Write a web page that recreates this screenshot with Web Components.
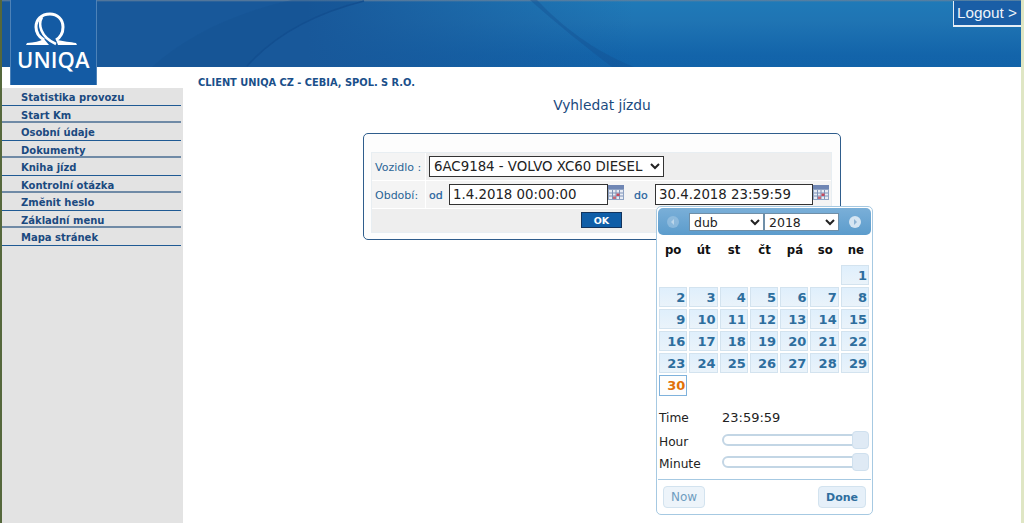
<!DOCTYPE html>
<html lang="cs">
<head>
<meta charset="utf-8">
<title>Vyhledat jízdu</title>
<style>
  html, body { margin: 0; padding: 0; background: #fff; }
  body { font-family: "DejaVu Sans", sans-serif; overflow: hidden; }
</style>
</head>
<body>
<uq-page>
  <uq-header slot="header"></uq-header>
  <uq-sidebar slot="sidebar"></uq-sidebar>
  <uq-client-title>CLIENT UNIQA CZ - CEBIA, SPOL. S R.O.</uq-client-title>
  <uq-page-title>Vyhledat jízdu</uq-page-title>
  <uq-search-form></uq-search-form>
</uq-page>

<script>
class UqPage extends HTMLElement {
  constructor() {
    super();
    this.attachShadow({ mode: "open" });
    this.shadowRoot.innerHTML = `
      <style>
        :host {
          display: block;
          box-sizing: border-box;
          height: 523px;
          border-left: 2px solid #55683c;
          border-right: 3px solid #dfe6c4;
          overflow: hidden;
        }
        .body { display: flex; height: 456px; }
        .side { width: 181px; flex: none; padding-top: 21px; box-sizing: border-box; }
        .main { flex: 1; display: flex; flex-direction: column; align-items: stretch; padding-top: 8px; }
      </style>
      <slot name="header"></slot>
      <div class="body">
        <div class="side"><slot name="sidebar"></slot></div>
        <div class="main"><slot></slot></div>
      </div>
    `;
  }
}

class UqHeader extends HTMLElement {
  constructor() {
    super();
    this.attachShadow({ mode: "open" });
    this.shadowRoot.innerHTML = `
      <style>
        :host {
          display: flex;
          justify-content: space-between;
          align-items: flex-start;
          height: 67px;
          position: relative;
          background:
            linear-gradient(180deg, #64809c 0, rgba(100,128,156,0) 2px),
            linear-gradient(90deg, rgba(24,88,154,1) 0, rgba(24,88,154,1) 30%, rgba(24,88,154,0) 62%),
            linear-gradient(180deg, #1f7ab8 0, #1f74b3 22px, #1364aa 55px, #1263a9 100%);
        }
        .swoosh { position: absolute; left: 0; top: 0; width: 1019px; height: 67px; }
        .logo {
          position: relative;
          flex: none;
          margin-left: 8px;
          width: 87px;
          height: 85px;
          background: #145ba4;
          border-left: 1px solid #4d82b8;
          border-right: 1px solid #4d82b8;
          box-sizing: border-box;
          display: flex;
          flex-direction: column;
          align-items: flex-start;
        }
        .logo svg { display: block; margin-top: 12px; margin-left: 14px; }
        .word {
          font: 600 22px/24px "Open Sans", sans-serif;
          color: #fff;
          letter-spacing: 0.1px;
          margin: 1px 0 0 6px;
        }
        .logout {
          position: relative;
          margin-top: 1px;
          height: 26px;
          width: 68px;
          box-sizing: border-box;
          background: #1a5ea6;
          border-left: 1px solid #e6eef6;
          border-bottom: 2px solid #e6eef6;
          color: #eef4fa;
          font: 15.3px/24px "Liberation Sans", Arial, sans-serif;
          padding-left: 3px;
          white-space: nowrap;
        }
      </style>
      <svg class="swoosh" viewBox="0 0 1019 67" fill="none">
        <path d="M150 67 C185 35 235 12 290 0 L362 0 C310 14 272 36 245 67 Z" fill="#15508f" opacity=".3"/>
        <path d="M245 66 C272 36 310 14 362 1" stroke="#134f90" stroke-width="1.5"/>
        <path d="M535 0 C560 26 590 50 632 67 L610 67 C585 48 555 24 528 0 Z" fill="#154f92" opacity=".4"/>
      </svg>
      <div class="logo">
        <svg width="54" height="34" viewBox="0 0 54 34" fill="none">
          <path d="M31 28 C36 25 38 20.5 38 15 C38 7 32 2 25 2 C16 2 11 8 11 15 C11 20 14 25 19 28" stroke="#fff" stroke-width="3"/>
          <path d="M17 5 C13 12 15 25 31 32" stroke="#fff" stroke-width="2.6"/>
          <path d="M1 33 L2 31 C9 30.5 15 29.5 19 27 L24 33 Z" fill="#fff"/>
          <path d="M31 27.5 C38 29.5 46 30 51 31 L52 33 L33 33 Z" fill="#fff"/>
        </svg>
        <div class="word">UNIQA</div>
      </div>
      <div class="logout">Logout &gt;</div>
    `;
  }
}

const MENU_ITEMS = [
  "Statistika provozu",
  "Start Km",
  "Osobní údaje",
  "Dokumenty",
  "Kniha jízd",
  "Kontrolní otázka",
  "Změnit heslo",
  "Základní menu",
  "Mapa stránek",
];

class UqSidebar extends HTMLElement {
  constructor() {
    super();
    this.attachShadow({ mode: "open" });
    const items = MENU_ITEMS.map((label, i) => {
      const cls = i % 2 ? "item alt" : "item";
      return `<a class="${cls}">${label}</a>`;
    }).join("");
    this.shadowRoot.innerHTML = `
      <style>
        :host {
          display: block;
          height: 435px;
          background: #e3e3e3;
          font: bold 10px "DejaVu Sans", sans-serif;
        }
        nav { display: flex; flex-direction: column; width: 179px; }
        .item {
          display: block;
          box-sizing: border-box;
          height: 17.5px;
          line-height: 19px;
          padding-left: 19px;
          color: #1b4a80;
          border-bottom: 1px solid #1f5a94;
          white-space: nowrap;
        }
        .alt { border-bottom: 2px solid #6f8aa6; }
      </style>
      <nav>${items}</nav>
    `;
  }
}

class UqClientTitle extends HTMLElement {
  constructor() {
    super();
    this.attachShadow({ mode: "open" });
    this.shadowRoot.innerHTML = `
      <style>
        :host {
          display: block;
          height: 14px;
          padding-left: 15px;
          font: bold 9.85px/15px "DejaVu Sans", sans-serif;
          color: #1a4f8a;
          white-space: nowrap;
        }
      </style>
      <slot></slot>
    `;
  }
}

class UqPageTitle extends HTMLElement {
  constructor() {
    super();
    this.attachShadow({ mode: "open" });
    this.shadowRoot.innerHTML = `
      <style>
        :host {
          display: block;
          margin-top: 8px;
          height: 20px;
          text-align: center;
          font: 13.8px/17px "DejaVu Sans", sans-serif;
          color: #1b4a7e;
        }
      </style>
      <slot></slot>
    `;
  }
}

class UqCalendarIcon extends HTMLElement {
  constructor() {
    super();
    this.attachShadow({ mode: "open" });
    this.shadowRoot.innerHTML = `
      <style>:host { display: block; flex: none; width: 16px; height: 15px; } svg { display: block; }</style>
      <svg width="16" height="15" viewBox="0 0 16 15">
        <rect x="0" y="0" width="16" height="15" fill="#8fa3c4"/>
        <rect x="0" y="0" width="16" height="4" fill="#6f86b4"/>
        <rect x="1" y="5" width="14" height="9" fill="#e8ecf4"/>
        <path d="M4.5 5v9M8 5v9M11.5 5v9M1 8h14M1 11h14" stroke="#7f93b8" stroke-width="1"/>
        <rect x="8.5" y="8.5" width="3" height="2.5" fill="#c8475a"/>
        <rect x="5" y="11.5" width="3" height="2.5" fill="#c86a78"/>
      </svg>
    `;
  }
}

class UqSearchForm extends HTMLElement {
  constructor() {
    super();
    this.attachShadow({ mode: "open" });
    this.shadowRoot.innerHTML = `
      <style>
        :host {
          display: block;
          position: relative;
          box-sizing: border-box;
          width: 478px;
          height: 107px;
          margin: 16px auto 0;
          padding: 18px 8px 7px 7px;
          border: 1px solid #2f5d8c;
          border-radius: 5px;
          background: #fdfdfd;
          color: #2a6496;
        }
        .table { display: grid; grid-template-columns: 53px 1fr; grid-template-rows: 27px 27px 23px; gap: 1px; background: #fff; border: 1px solid #e8eef2; }
        .label, .cell { display: flex; align-items: center; white-space: nowrap; }
        .label { background: #f4f4f4; padding: 1px 0 0 3px; box-sizing: border-box; font: 11px "DejaVu Sans", sans-serif; color: #2a6496; }
        .cell { background: #eeeeee; }
        .cell.light { background: #f4f4f4; }
        .ok-row { grid-column: 1 / 3; background: #eeeeee; display: flex; justify-content: center; align-items: flex-start; padding-top: 3px; }
        .pad { padding-left: 3px; }
        select, input {
          font: 13.33px "DejaVu Sans", sans-serif;
          color: #222;
          box-sizing: border-box;
          background: #fff;
          border: 1px solid #333;
          border-radius: 0;
          margin: 0;
        }
        select { width: 235px; height: 21px; padding: 0; }
        input { height: 21px; width: 159px; padding: 0 3px; }
        input.to { width: 158px; }
        .tag { flex: none; box-sizing: border-box; width: 20px; padding-top: 2px; font: 11px "DejaVu Sans", sans-serif; font-weight: 500; color: #1f5f9c; -webkit-text-stroke: 0.2px #1f5f9c; }
        .tag.do { width: 31px; padding-left: 10px; }
        uq-calendar-icon { margin-bottom: 4px; }
        button.ok {
          width: 41px;
          height: 16px;
          padding: 0;
          background: #0f5ea8;
          border: 1px solid #12335c;
          color: #fff;
          font: bold 9.5px "DejaVu Sans", sans-serif;
        }
        uq-date-picker { position: absolute; left: 292px; top: 72px; }
      </style>
      <div class="table">
        <div class="label">Vozidlo :</div>
        <div class="cell pad">
          <select><option>6AC9184 - VOLVO XC60 DIESEL</option></select>
        </div>
        <div class="label">Období:</div>
        <div class="cell light pad">
          <span class="tag">od</span>
          <input value="1.4.2018 00:00:00">
          <uq-calendar-icon></uq-calendar-icon>
          <span class="tag do">do</span>
          <input class="to" value="30.4.2018 23:59:59">
          <uq-calendar-icon></uq-calendar-icon>
        </div>
        <div class="ok-row"><button class="ok">OK</button></div>
      </div>
      <uq-date-picker></uq-date-picker>
    `;
  }
}

const MONTH_DAYS = 30;
const FIRST_OFFSET = 6;
const WEEK_DAYS = ["po", "út", "st", "čt", "pá", "so", "ne"];

class UqDatePicker extends HTMLElement {
  constructor() {
    super();
    this.attachShadow({ mode: "open" });
    let cells = "<i></i>".repeat(FIRST_OFFSET);
    for (let d = 1; d <= MONTH_DAYS; d++) {
      cells += `<a class="${d === 30 ? "day today" : "day"}">${d}</a>`;
    }
    const names = WEEK_DAYS.map((n) => `<span>${n}</span>`).join("");
    this.shadowRoot.innerHTML = `
      <style>
        :host {
          display: block;
          box-sizing: border-box;
          width: 217px;
          height: 309px;
          padding: 1px;
          background: #fff;
          border: 1px solid #a6c9e2;
          border-radius: 5px;
          font: 12.2px "DejaVu Sans", sans-serif;
          color: #222;
        }
        .head {
          position: relative;
          height: 27px;
          background: linear-gradient(180deg, #7aafd8 0, #5c9ccc 100%);
          border-radius: 5px;
          display: flex;
          align-items: center;
          padding-left: 31px;
        }
        .head select {
          height: 18px;
          font: 12.5px "DejaVu Sans", sans-serif;
          color: #222;
          background: #fff;
          border: 1px solid #6f8fa8;
          border-radius: 0;
          padding: 0;
          margin: 0;
        }
        .month { width: 75px; }
        .year { width: 75px; }
        .nav {
          position: absolute;
          top: 8px;
          width: 12px;
          height: 12px;
          border-radius: 50%;
          background: #a9cbe6;
        }
        .nav.prev { left: 9px; opacity: .55; }
        .nav.next { left: 191px; background: #d5e5f2; }
        .nav svg { display: block; }
        .week {
          display: grid;
          grid-template-columns: repeat(7, 1fr);
          gap: 2px;
          height: 30px;
          margin: 0 1px;
          align-items: center;
          text-align: center;
          font: bold 11.7px "DejaVu Sans", sans-serif;
          color: #111;
        }
        .days {
          display: grid;
          grid-template-columns: repeat(7, 1fr);
          grid-auto-rows: 20px;
          gap: 2px;
          margin: 0 1px;
          width: 210px;
        }
        .day {
          box-sizing: border-box;
          border: 1px solid #d3e3ef;
          background: linear-gradient(180deg, #dfeffc 0, #eaf3fa 100%);
          color: #2e6e9e;
          font: bold 13px/19px "DejaVu Sans", sans-serif;
          text-align: right;
          padding-right: 1px;
        }
        .day.today { background: #fdfdfd; border-color: #7fb2dc; color: #e17009; height: 21px; }
        .row {
          display: grid;
          grid-template-columns: 63px 1fr;
          align-items: center;
          height: 22px;
          margin-left: 1px;
        }
        .row.slider span { padding-top: 2px; }
        .row.time { height: 25px; margin-top: 10px; }
        .row.time span + span { font-size: 13px; }
        .track {
          position: relative;
          box-sizing: border-box;
          height: 12px;
          width: 147px;
          margin-top: -2px;
          border: 2px solid #c3d6e5;
          border-radius: 6px;
          background: #fff;
        }
        .handle {
          position: absolute;
          right: -2px;
          top: -5px;
          width: 17px;
          height: 18px;
          box-sizing: border-box;
          background: #dfeaf5;
          border: 1px solid #cfe0ee;
          border-radius: 4px;
        }
        .foot {
          margin-top: 5px;
          border-top: 1px solid #a6c9e2;
          padding: 6px 5px 0 5px;
          display: flex;
          justify-content: space-between;
        }
        .foot button {
          height: 22px;
          box-sizing: border-box;
          padding: 0;
          border: 1px solid #d3e3ef;
          border-radius: 4px;
          background: #e6f0f9;
          font: bold 11px "DejaVu Sans", sans-serif;
          color: #2e6e9e;
        }
        .foot .now { width: 42px; font: 12px "DejaVu Sans", sans-serif; color: #6f9dc0; background: #edf4fa; }
        .done { width: 48px; }
      </style>
      <div class="head">
        <span class="nav prev"><svg width="12" height="12" viewBox="0 0 12 12"><path d="M7 3 4 6l3 3z" fill="#fff"/></svg></span>
        <select class="month"><option>dub</option></select>
        <select class="year"><option>2018</option></select>
        <span class="nav next"><svg width="12" height="12" viewBox="0 0 12 12"><path d="M5 3l3 3-3 3z" fill="#8fb4d4"/></svg></span>
      </div>
      <div class="week">${names}</div>
      <div class="days">${cells}</div>
      <div class="row time"><span>Time</span><span>23:59:59</span></div>
      <div class="row slider"><span>Hour</span><div class="track"><div class="handle"></div></div></div>
      <div class="row slider"><span>Minute</span><div class="track"><div class="handle"></div></div></div>
      <div class="foot">
        <button class="now">Now</button>
        <button class="done">Done</button>
      </div>
    `;
  }
}

customElements.define("uq-page", UqPage);
customElements.define("uq-header", UqHeader);
customElements.define("uq-sidebar", UqSidebar);
customElements.define("uq-client-title", UqClientTitle);
customElements.define("uq-page-title", UqPageTitle);
customElements.define("uq-calendar-icon", UqCalendarIcon);
customElements.define("uq-date-picker", UqDatePicker);
customElements.define("uq-search-form", UqSearchForm);
</script>
</body>
</html>
